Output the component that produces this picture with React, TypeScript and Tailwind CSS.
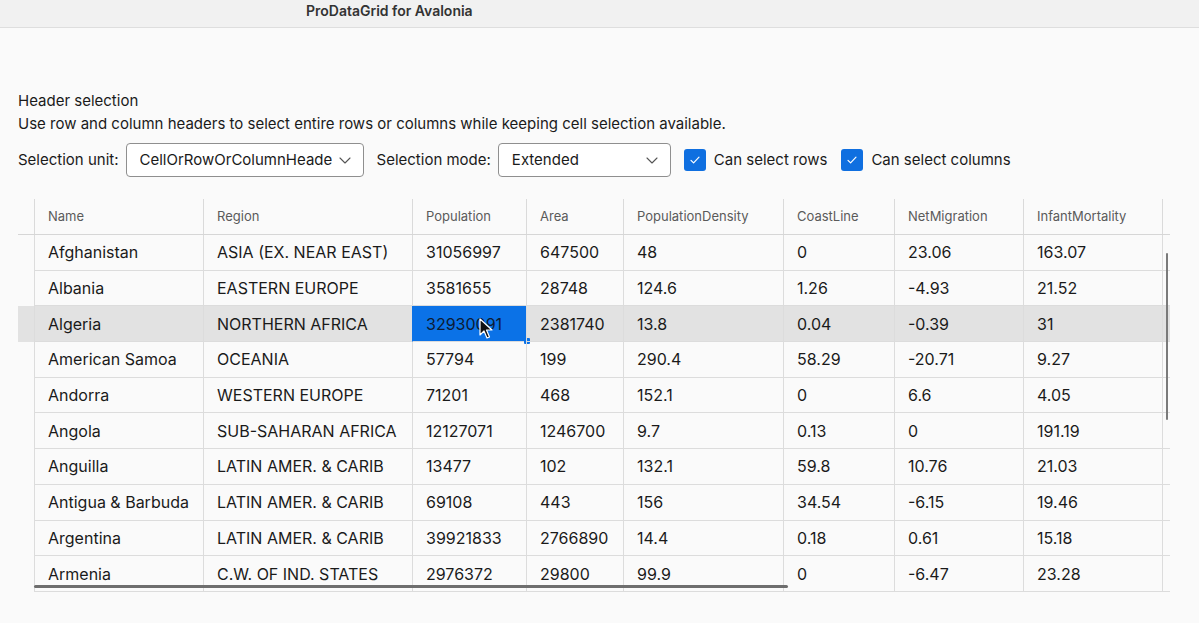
import React from "react";

const columns = [
  { key: "name", label: "Name", width: 169 },
  { key: "region", label: "Region", width: 209 },
  { key: "population", label: "Population", width: 114 },
  { key: "area", label: "Area", width: 97 },
  { key: "density", label: "PopulationDensity", width: 160 },
  { key: "coast", label: "CoastLine", width: 111 },
  { key: "migration", label: "NetMigration", width: 129 },
  { key: "infant", label: "InfantMortality", width: 139 },
];

const rows: string[][] = [
  ["Afghanistan", "ASIA (EX. NEAR EAST)", "31056997", "647500", "48", "0", "23.06", "163.07"],
  ["Albania", "EASTERN EUROPE", "3581655", "28748", "124.6", "1.26", "-4.93", "21.52"],
  ["Algeria", "NORTHERN AFRICA", "32930091", "2381740", "13.8", "0.04", "-0.39", "31"],
  ["American Samoa", "OCEANIA", "57794", "199", "290.4", "58.29", "-20.71", "9.27"],
  ["Andorra", "WESTERN EUROPE", "71201", "468", "152.1", "0", "6.6", "4.05"],
  ["Angola", "SUB-SAHARAN AFRICA", "12127071", "1246700", "9.7", "0.13", "0", "191.19"],
  ["Anguilla", "LATIN AMER. & CARIB", "13477", "102", "132.1", "59.8", "10.76", "21.03"],
  ["Antigua & Barbuda", "LATIN AMER. & CARIB", "69108", "443", "156", "34.54", "-6.15", "19.46"],
  ["Argentina", "LATIN AMER. & CARIB", "39921833", "2766890", "14.4", "0.18", "0.61", "15.18"],
  ["Armenia", "C.W. OF IND. STATES", "2976372", "29800", "99.9", "0", "-6.47", "23.28"],
];

const SELECTED_ROW = 2;
const SELECTED_COL = 2;

function Chevron() {
  return (
    <svg width="14" height="14" viewBox="0 0 14 14" fill="none">
      <path d="M2 5l5 5 5-5" stroke="#555" strokeWidth="1.1" strokeLinecap="round" strokeLinejoin="round" />
    </svg>
  );
}

function Combo({ value, width }: { value: string; width: string }) {
  return (
    <div
      className={`flex h-[34px] items-center justify-between overflow-hidden rounded-[4px] border border-[#8f8f8f] bg-white pl-[13px] pr-[11px] ${width}`}
    >
      <span className="min-w-0 flex-1 overflow-hidden whitespace-nowrap text-[15px] text-[#1a1a1a]">{value}</span>
      <span className="ml-[6px] shrink-0">
        <Chevron />
      </span>
    </div>
  );
}

function Check({ label }: { label: string }) {
  return (
    <label className="flex items-center gap-[8px]">
      <span className="flex h-[22px] w-[22px] items-center justify-center rounded-[3px] bg-[#0f6fe0]">
        <svg width="14" height="14" viewBox="0 0 14 14" fill="none">
          <path d="M3 7.3l2.6 2.6L11 4.2" stroke="white" strokeWidth="1.2" strokeLinecap="round" strokeLinejoin="round" />
        </svg>
      </span>
      <span className="text-[15px] text-[#1a1a1a]">{label}</span>
    </label>
  );
}

function Cursor() {
  return (
    <svg width="14" height="22" viewBox="0 0 14 22" className="pointer-events-none absolute left-[66px] top-[12px]">
      <path d="M1 1v16l4-4 3 7 2.5-1-3-7h5.5z" fill="#111" stroke="white" strokeWidth="1.2" strokeLinejoin="round" />
    </svg>
  );
}

export default function App() {
  return (
    <div
      className="relative h-[623px] w-[1199px] overflow-hidden bg-[#fafafa] text-[#1a1a1a]"
      style={{ fontFamily: "Inter, 'Noto Sans', sans-serif" }}
    >
      <div className="h-[28px] border-b border-[#dedede] bg-[#f1f1f1] pl-[306px] text-[14px] leading-[22px]">
        <span className="font-semibold text-[#333]">ProDataGrid for Avalonia</span>
      </div>

      <div className="pl-[18px] pt-[63px]">
        <div className="text-[15px] leading-[20px]">Header selection</div>
        <div className="mt-[3px] text-[15px] leading-[20px]">
          Use row and column headers to select entire rows or columns while keeping cell selection available.
        </div>

        <div className="mt-[9px] flex items-center text-[15px]">
          <span>Selection unit:</span>
          <div className="ml-[7px]">
            <Combo value="CellOrRowOrColumnHeader" width="w-[238px]" />
          </div>
          <span className="ml-[13px]">Selection mode:</span>
          <div className="ml-[7px]">
            <Combo value="Extended" width="w-[173px]" />
          </div>
          <div className="ml-[13px]">
            <Check label="Can select rows" />
          </div>
          <div className="ml-[14px]">
            <Check label="Can select columns" />
          </div>
        </div>

        <div className="relative mt-[22px] w-[1152px]">
          {/* header */}
          <div className="flex h-[36px] border-b border-[#d6d6d6]">
            <div className="w-[16px] shrink-0" />
            {columns.map((c) => (
              <div
                key={c.key}
                style={{ width: c.width }}
                className="flex shrink-0 items-center border-l border-[#dadada] pl-[13px] text-[13px] text-[#5a5a5a]"
              >
                {c.label}
              </div>
            ))}
            <div className="flex-1 border-l border-[#dadada]" />
          </div>

          {rows.map((r, ri) => {
            const sel = ri === SELECTED_ROW;
            return (
              <div key={r[0]} className={`flex h-[35.7px] ${sel ? "bg-[#e2e2e2]" : ""}`}>
                <div className="w-[16px] shrink-0" />
                {r.map((v, ci) => {
                  const cellSel = sel && ci === SELECTED_COL;
                  return (
                    <div
                      key={ci}
                      style={{ width: columns[ci].width }}
                      className={`relative flex shrink-0 items-center border-b border-l border-[#dcdcdc] pl-[13px] text-[16px] ${
                        cellSel ? "border-l-[#0b72e7] bg-[#0b72e7] text-[#0d1b33]" : ""
                      }`}
                    >
                      {v}
                      {cellSel && (
                        <>
                          <span className="absolute -bottom-[3px] -right-[4px] h-[6px] w-[6px] rounded-[1px] bg-[#0b72e7]" />
                          <Cursor />
                        </>
                      )}
                    </div>
                  );
                })}
                <div className="flex-1 border-b border-l border-[#dcdcdc]" />
              </div>
            );
          })}

          {/* scrollbars */}
          <div className="absolute left-[1148px] top-[54px] h-[167px] w-[2px] rounded bg-[#7a7a7a]" />
          <div className="absolute left-[16px] top-[386px] h-[3px] w-[754px] rounded bg-[#6e6e6e]" />
        </div>
      </div>
    </div>
  );
}
